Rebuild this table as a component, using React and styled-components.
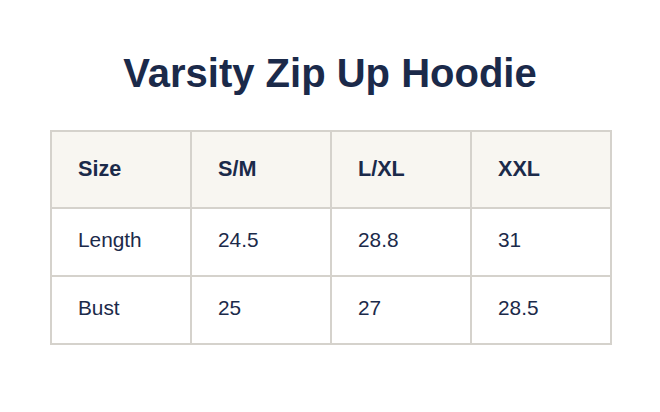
import React from "react";
import styled, { createGlobalStyle } from "styled-components";

const GlobalStyle = createGlobalStyle`
  html, body {
    margin: 0;
    padding: 0;
    background: #ffffff;
  }
  body {
    font-family: "Liberation Sans", Arial, sans-serif;
    color: #1b2a4a;
  }
`;

const Page = styled.div`
  width: 660px;
  height: 412px;
  padding-top: 49px;
  box-sizing: border-box;
  display: flex;
  flex-direction: column;
  align-items: center;
`;

const Title = styled.h1`
  margin: 0 0 33px;
  font-size: 40px;
  line-height: 48px;
  font-weight: 700;
  color: #1b2a4a;
`;

const Table = styled.table`
  width: 562px;
  margin-left: 2px;
  border-collapse: collapse;
  table-layout: fixed;
  border: 2px solid #d5d2cc;
`;

const HeadCell = styled.th`
  background: #f8f6f1;
  border: 2px solid #d5d2cc;
  text-align: left;
  font-size: 21.6px;
  font-weight: 700;
  line-height: 24px;
  padding: 25px 26px 26px;
  vertical-align: middle;
`;

const Cell = styled.td`
  border: 2px solid #d5d2cc;
  text-align: left;
  font-size: 20.8px;
  font-weight: 400;
  line-height: 24px;
  padding: 19px 26px 23px;
  vertical-align: middle;
`;

const sizes = ["Size", "S/M", "L/XL", "XXL"];

const rows = [
  ["Length", "24.5", "28.8", "31"],
  ["Bust", "25", "27", "28.5"],
];

export default function App() {
  return (
    <>
      <GlobalStyle />
      <Page>
        <Title>Varsity Zip Up Hoodie</Title>
        <Table>
          <thead>
            <tr>
              {sizes.map((s) => (
                <HeadCell key={s}>{s}</HeadCell>
              ))}
            </tr>
          </thead>
          <tbody>
            {rows.map((row) => (
              <tr key={row[0]}>
                {row.map((v, i) => (
                  <Cell key={i}>{v}</Cell>
                ))}
              </tr>
            ))}
          </tbody>
        </Table>
      </Page>
    </>
  );
}
